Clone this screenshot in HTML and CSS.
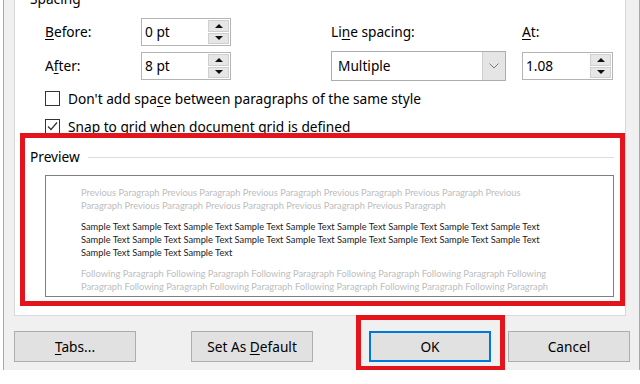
FILE: index.html
```html
<!DOCTYPE html>
<html lang="en">
<head>
<meta charset="UTF-8" />
<title>Paragraph</title>
<link rel="stylesheet" href="styles.css">
</head>
<body>

<div class="dialog">
  <div class="page">
    <div class="legend">Spacing</div>

    <div class="spacing-grid">
      <label class="lbl"><u>B</u>efore:</label>
      <div class="spin">
        <span class="val">0 pt</span>
        <span class="arrows"><span class="arr up"></span><span class="arr down"></span></span>
      </div>
      <span></span>
      <label class="lbl">Li<u>n</u>e spacing:</label>
      <span></span>
      <label class="lbl"><u>A</u>t:</label>

      <label class="lbl">A<u>f</u>ter:</label>
      <div class="spin">
        <span class="val">8 pt</span>
        <span class="arrows"><span class="arr up"></span><span class="arr down"></span></span>
      </div>
      <span></span>
      <div class="select">
        <span class="val">Multiple</span>
        <span class="drop">
          <svg width="10" height="6" viewBox="0 0 10 6"><polyline points="0.5,0.5 5,5 9.5,0.5" fill="none" stroke="#7a7a7a" stroke-width="1"/></svg>
        </span>
      </div>
      <span></span>
      <div class="spin">
        <span class="val">1.08</span>
        <span class="arrows"><span class="arr up"></span><span class="arr down"></span></span>
      </div>
    </div>

    <div class="check-row first">
      <span class="box"></span>
      <span>Don't add spa<u>c</u>e between paragraphs of the same style</span>
    </div>
    <div class="check-row">
      <span class="box">
        <svg width="13" height="13" viewBox="0 0 13 13"><polyline points="2,6.5 5,9.5 11,2.5" fill="none" stroke="#333" stroke-width="1.2"/></svg>
      </span>
      <span>Snap to grid <u>w</u>hen document grid is defined</span>
    </div>

    <section class="preview-group">
      <div class="preview-head"><span>Preview</span><span class="rule"></span></div>
      <div class="preview-box">
        <div class="para ghost">
          <div>Previous Paragraph Previous Paragraph Previous Paragraph Previous Paragraph Previous Paragraph Previous</div>
          <div>Paragraph Previous Paragraph Previous Paragraph Previous Paragraph Previous Paragraph</div>
        </div>
        <div class="para sample">
          <div>Sample Text Sample Text Sample Text Sample Text Sample Text Sample Text Sample Text Sample Text Sample Text</div>
          <div>Sample Text Sample Text Sample Text Sample Text Sample Text Sample Text Sample Text Sample Text Sample Text</div>
          <div>Sample Text Sample Text Sample Text</div>
        </div>
        <div class="para ghost">
          <div>Following Paragraph Following Paragraph Following Paragraph Following Paragraph Following Paragraph Following</div>
          <div>Paragraph Following Paragraph Following Paragraph Following Paragraph Following Paragraph Following Paragraph</div>
          <div>Following Paragraph Following Paragraph Following Paragraph Following Paragraph Following Paragraph Following</div>
        </div>
      </div>
    </section>
  </div>

  <div class="buttons">
    <button class="btn"><u>T</u>abs...</button>
    <button class="btn">Set As <u>D</u>efault</button>
    <span class="ok-wrap"><button class="btn ok">OK</button></span>
    <button class="btn cancel">Cancel</button>
  </div>
</div>

</body>
</html>
```

FILE: styles.css
```css
/* base */
* {
  box-sizing: border-box;
}
body {
  margin: 0;
  background: #fff;
  font-family: 'Noto Sans', sans-serif;
  font-size: 13.7px;
  color: #000;
  overflow: hidden;
}
u {
  text-decoration-thickness: 1px;
  text-underline-offset: 2px;
}

/* dialog frame */
.dialog {
  display: flow-root;
  margin-left: 3px;
  width: 637px;
  height: 370px;
  background: #f0f0f0;
  border-left: 1px solid #a8a8a8;
  border-right: 1px solid #a8a8a8;
  padding-left: 10px;
}
.page {
  display: flow-root;
  width: 612px;
  height: 316px;
  background: #fff;
  border: 1px solid #d9d9d9;
  border-top: none;
}
.legend {
  margin-top: -9px;
  margin-left: 15px;
  line-height: 16px;
  height: 16px;
}

/* spacing fields */
.spacing-grid {
  display: grid;
  grid-template-columns: 96px 90px 100px 175px 16px 91px;
  grid-template-rows: 28px 28px;
  row-gap: 6px;
  align-items: center;
  margin-top: 11px;
  margin-left: 30px;
}
.lbl {
  line-height: 18px;
}
.spin {
  display: flex;
  height: 28px;
  border: 1px solid #b4b4b4;
  background: #fff;
  padding: 1px;
}
.spin .val {
  flex: 1;
  line-height: 24px;
  padding-left: 2px;
}
.arrows {
  width: 21px;
  display: flex;
  flex-direction: column;
  gap: 1px;
}
.arr {
  flex: 1;
  background: #e6e6e6;
  border: 1px solid #cfcfcf;
  display: flex;
  align-items: center;
  justify-content: center;
}
.arr::after {
  content: "";
  border-left: 4px solid transparent;
  border-right: 4px solid transparent;
}
.arr.up::after {
  border-bottom: 4px solid #111;
}
.arr.down::after {
  border-top: 4px solid #111;
}
.select {
  display: flex;
  height: 30px;
  border: 1px solid #adadad;
  background: #fff;
}
.select .val {
  flex: 1;
  line-height: 28px;
  padding-left: 6px;
}
.drop {
  width: 23px;
  background: #e5e5e5;
  border-left: 1px solid #cdcdcd;
  display: flex;
  align-items: center;
  justify-content: center;
}

/* checkboxes */
.check-row {
  display: flex;
  align-items: center;
  height: 22px;
  margin-top: 6px;
  margin-left: 30px;
}
.check-row.first {
  margin-top: 7px;
}
.box {
  width: 15px;
  height: 15px;
  border: 1px solid #333;
  background: #fff;
  margin-right: 8px;
  display: flex;
  align-items: center;
  justify-content: center;
}

/* preview */
.preview-group {
  margin-top: -4px;
  margin-left: 5px;
  width: 605px;
  height: 173px;
  border: 5px solid #e3141c;
  background: #fff;
  position: relative;
}
.preview-head {
  display: flex;
  align-items: center;
  gap: 8px;
  margin-top: 10px;
  padding-left: 5px;
  line-height: 18px;
}
.rule {
  width: 0;
  flex: 1;
  height: 1px;
  background: #dcdcdc;
  margin-right: 6px;
}
.preview-box {
  margin: 9px 6px 0 20px;
  height: 122px;
  border: 1px solid #7f7f7f;
  overflow: hidden;
  padding: 10px 0 0 35px;
  font-family: 'Lato', sans-serif;
  font-size: 9.3px;
  line-height: 13px;
  white-space: nowrap;
}
.para {
  margin-bottom: 8px;
}
.ghost {
  color: #bdbdbd;
}
.sample {
  color: #222;
}

/* buttons */
.buttons {
  display: flex;
  margin-top: 15px;
}
.btn {
  width: 122px;
  height: 31px;
  background: #e1e1e1;
  border: 1px solid #adadad;
  font-family: 'Noto Sans', sans-serif;
  font-size: 13.7px;
  color: #000;
  padding: 0;
}
.btn + .btn {
  margin-left: 55px;
}
.ok-wrap {
  position: relative;
  margin-left: 56px;
}
.ok-wrap::after {
  content: "";
  position: absolute;
  top: -16px;
  left: -13px;
  right: -14px;
  bottom: -9px;
  border: 5px solid #e3141c;
}
.btn.ok {
  border: 2px solid #0078d7;
}
.btn.cancel {
  margin-left: 17px;
}
```
